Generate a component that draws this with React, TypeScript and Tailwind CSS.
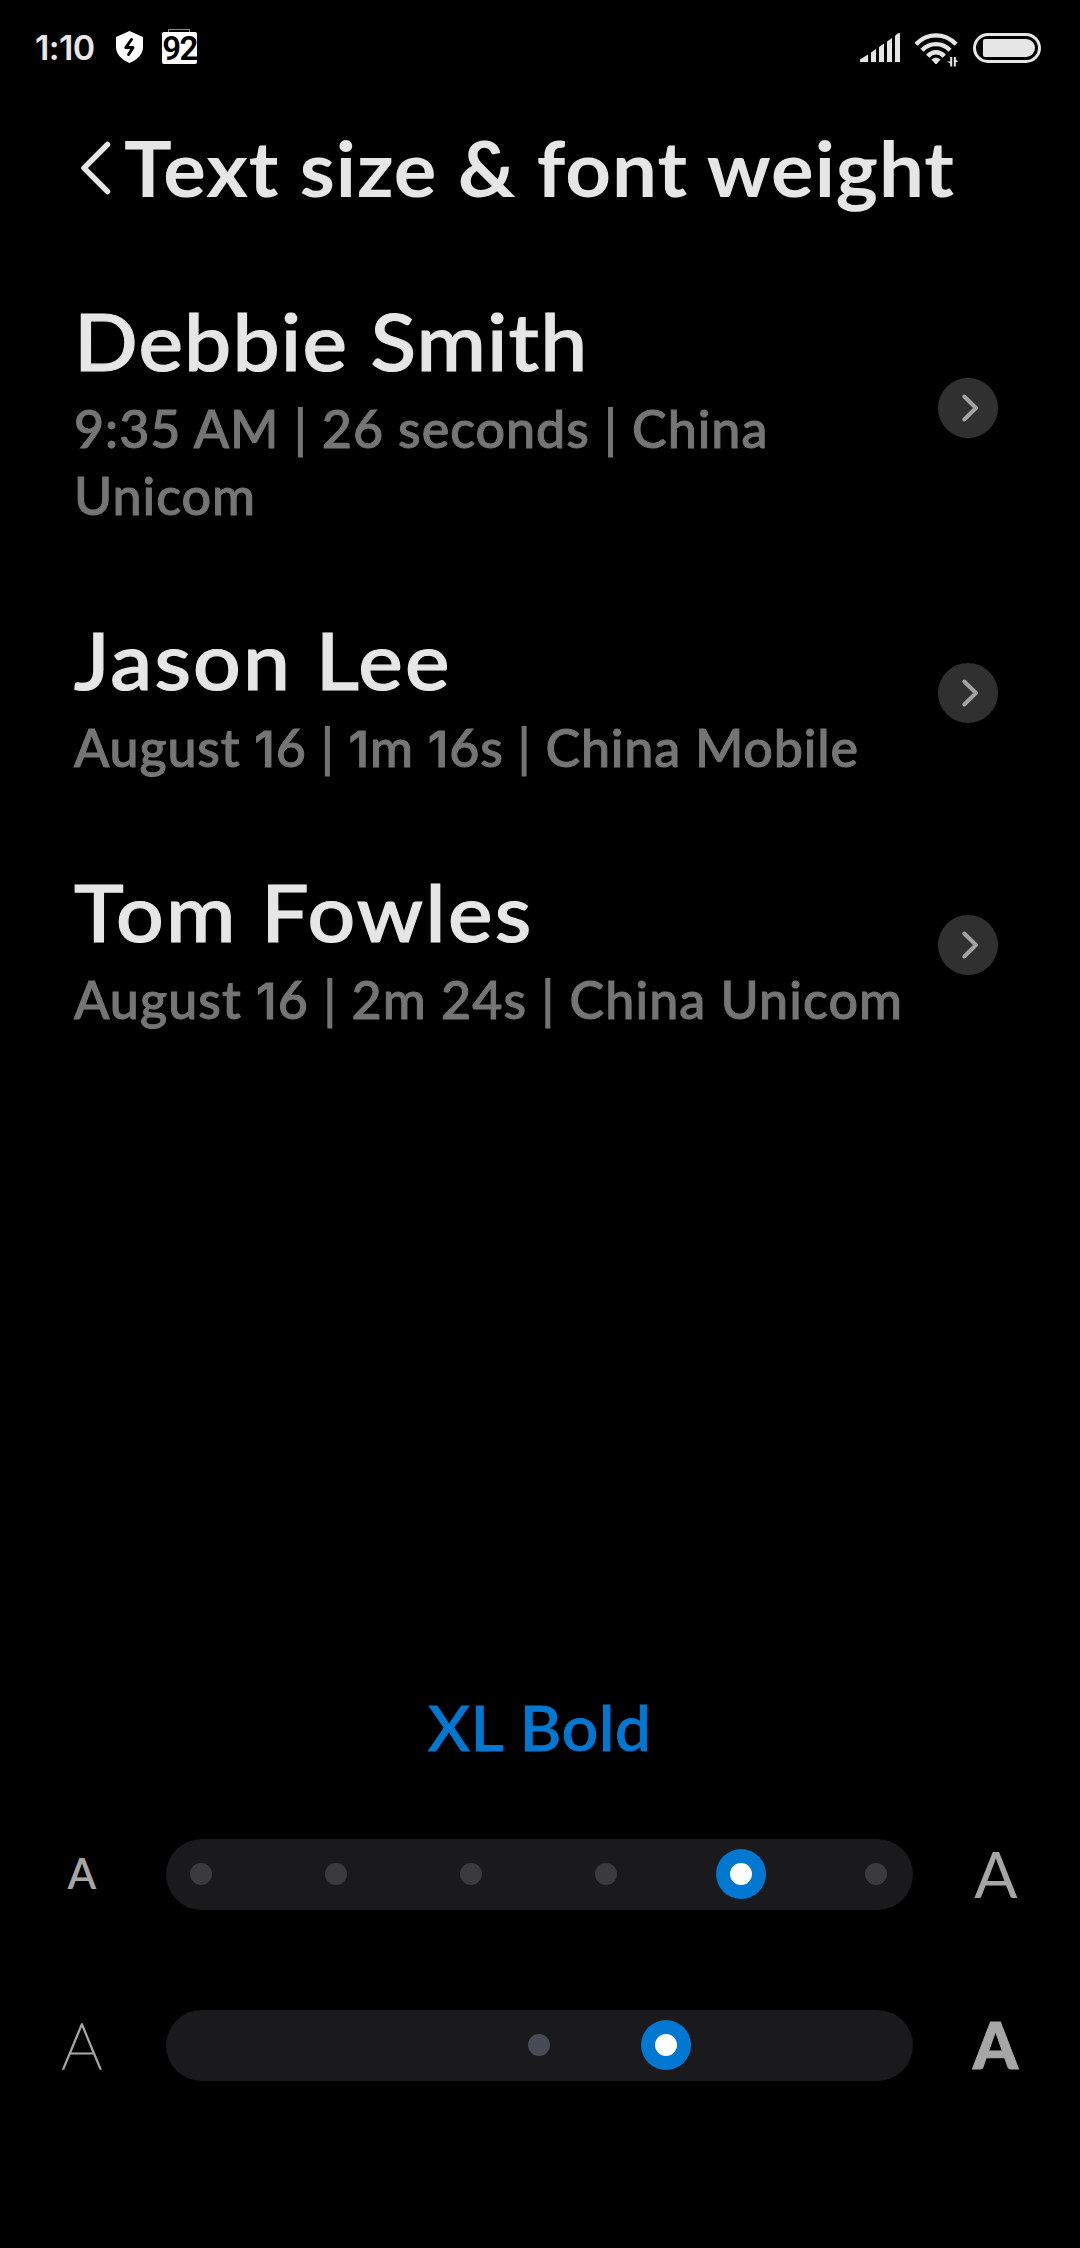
import { Fragment } from "react";

const CALLS = [
  { name: "Debbie Smith", detail: "9:35 AM | 26 seconds | China Unicom", nameGap: "tracking-[1.1px]", detailGap: "tracking-[0.95px]" },
  { name: "Jason Lee", detail: "August 16 | 1m 16s | China Mobile", nameGap: "tracking-[2.1px]", detailGap: "tracking-[0.8px]" },
  { name: "Tom Fowles", detail: "August 16 | 2m 24s | China Unicom", nameGap: "tracking-[2.2px]", detailGap: "tracking-[1.05px]" },
];

const SIZE_STEPS = [0, 1, 2, 3, 4, 5];
const ACTIVE_SIZE = 4;

// Lato's "1" has a foot, so ones are set in Inter
function Digits({ text }: { text: string }) {
  return (
    <>
      {text.split("1").map((part, i) => (
        <Fragment key={i}>
          {i > 0 && <span className="font-[Inter] text-[0.96em] leading-none">1</span>}
          {part}
        </Fragment>
      ))}
    </>
  );
}

function StatusBar() {
  return (
    <header className="flex h-24 items-center justify-between pl-[35px] pr-[39px]">
      <div className="flex h-full items-center">
        <span className="w-[81px] font-[Inter] text-[34px] font-semibold leading-none tracking-[-0.6px]">1:10</span>
        <svg width="27" height="32" viewBox="0 0 27 32" className="relative -top-px" aria-hidden="true">
          <path d="M13.5 0 L27 6 V16 C27 23.5 21 29 13.5 32 C6 29 0 23.5 0 16 V6 Z" fill="#fff" />
          <path d="M15.5 8.5 L9.8 16.5 H17 L12.6 23.5" fill="none" stroke="#000" strokeWidth="3" strokeLinecap="round" strokeLinejoin="round" />
        </svg>
        <div className="relative ml-[19px] flex h-8 w-[35px] items-center justify-center rounded-[2px] bg-white">
          <span className="absolute -top-[3px] left-[6px] h-[3px] w-[22px] border border-b-0 border-[#8a8a8a]" />
          <span className="font-[Roboto] text-[33px] font-semibold leading-none tracking-[-1.6px] text-black">92</span>
        </div>
      </div>
      <div className="flex items-center">
        <svg width="41" height="30" viewBox="0 0 41 30" fill="#e6e6e6" aria-hidden="true">
          <path d="M0 29 V26.5 L8 21.5 V29 Z M11 29 V19.5 L16 16 V29 Z M19 29 V14 L24 10.5 V29 Z M27 29 V8.5 L32 5 V29 Z M35 29 V3 L37.5 0.5 L40 0 V29 Z" />
        </svg>
        <svg width="43" height="34" viewBox="0 0 43 34" className="relative top-0.5 ml-[14px] mr-px" aria-hidden="true">
          <g fill="none" stroke="#e6e6e6" strokeWidth="4.4">
            <path d="M1 11.3 C12 -0.6 30 -0.6 41 11.3" />
            <path d="M7 17.3 C14.5 9 27.5 9 35 17.3" />
            <path d="M12.8 23.2 C17.5 18 24.5 18 29.2 23.2" />
          </g>
          <path d="M21 31 L17 26.5 Q21 23.5 25 26.5 Z" fill="#e6e6e6" stroke="#e6e6e6" strokeWidth="1" />
          <path d="M35.2 24 H37.2 V33.5 H35.2 V30.5 L32 28.5 H35.2 Z M38.8 24 H40.8 V26.5 L43 29 H40.8 V33.5 H38.8 Z" fill="#e6e6e6" />
        </svg>
        <svg width="68" height="30" viewBox="0 0 68 30" className="ml-[14px]" aria-hidden="true">
          <rect x="1.5" y="1.5" width="65" height="27" rx="13.5" fill="none" stroke="#e6e6e6" strokeWidth="3" />
          <path d="M12 6 H53 A9 9 0 0 1 53 24 H12 Q10 24 10 22 V8 Q10 6 12 6 Z" fill="#e6e6e6" />
        </svg>
      </div>
    </header>
  );
}

function CallRow({ name, detail, nameGap, detailGap }: (typeof CALLS)[number]) {
  return (
    <li className="flex items-center pl-[74px] pr-[82px]">
      <div className="flex-1 pb-[38px] pt-[44px]">
        <h2 className={`origin-left scale-x-[1.05] text-[80px] font-medium leading-[96px] text-[#e6e6e6] [-webkit-text-stroke:1.2px_#e6e6e6] ${nameGap}`}>{name}</h2>
        <p className={`mt-[7px] w-[850px] text-[52px] font-medium leading-[67px] text-[#757575] [-webkit-text-stroke:1px_#757575] ${detailGap}`}>
          <Digits text={detail} />
        </p>
      </div>
      <button className="-ml-[60px] flex size-[60px] shrink-0 items-center justify-center rounded-full bg-[#303030]" aria-label={name}>
        <svg width="60" height="60" viewBox="0 0 60 60" fill="none" stroke="#a3a3a3" strokeWidth="4" strokeLinecap="round" strokeLinejoin="round">
          <path d="M26.3 18.5 L38 30 L26.3 41.5" />
        </svg>
      </button>
    </li>
  );
}

function Knob() {
  return (
    <span className="flex size-[50px] items-center justify-center rounded-full bg-[#0077d0]">
      <span className="size-[22px] rounded-full bg-white" />
    </span>
  );
}

export default function App() {
  return (
    <main className="flex h-[2248px] w-[1080px] flex-col overflow-hidden bg-black font-[Lato,sans-serif] text-[#e6e6e6]">
      <StatusBar />

      <div className="flex h-[152px] items-start pl-[80px] pt-[26px]">
        <svg width="32" height="54" viewBox="0 0 32 54" className="mt-[19px]" fill="none" stroke="#e6e6e6" strokeWidth="5.5" strokeLinecap="round" strokeLinejoin="round" aria-label="Back">
          <path d="M27.5 3.5 L4 27 L27.5 50.5" />
        </svg>
        <h1 className="ml-[12px] origin-left scale-x-[1.05] whitespace-nowrap text-[76px] font-bold leading-[92px] tracking-[0.9px]">Text size &amp; font weight</h1>
      </div>

      <ul className="flex flex-col">
        {CALLS.map((call) => (
          <CallRow key={call.name} {...call} />
        ))}
      </ul>

      <section className="mt-auto flex flex-col pb-[167px] text-[#a6a6a6]">
        <p className="mb-[75px] scale-x-[1.05] text-center text-[61px] font-medium leading-[73px] tracking-[0.8px] text-[#0077d0] [-webkit-text-stroke:1px_#0077d0]">XL Bold</p>

        <div className="flex items-center">
          <span className="w-[164px] pb-0.5 text-center text-[42px] font-semibold leading-[67px]">A</span>
          <div className="ml-0.5 flex h-[71px] w-[747px] rounded-full bg-[#1a1a1c] pb-px pl-[10px] pr-[12px]">
            <div className="flex w-full items-center justify-between">
              {SIZE_STEPS.map((step) => (
                <span key={step} className="flex w-[50px] justify-center">
                  {step === ACTIVE_SIZE ? <Knob /> : <span className="size-[22px] rounded-full bg-[#3b3b3d]" />}
                </span>
              ))}
            </div>
          </div>
          <span className="w-[166px] pb-0.5 text-center text-[64px] font-normal leading-[67px]">A</span>
        </div>

        <div className="mt-[100px] flex items-center">
          <span className="w-[164px] pb-0.5 text-center text-[64px] font-thin leading-[67px] [-webkit-text-stroke:1.4px_#a6a6a6]">A</span>
          <div className="ml-0.5 flex h-[71px] w-[747px] items-center rounded-full bg-[#1a1a1c] pb-px pl-[362px]">
            <span className="mr-[91px] size-[22px] rounded-full bg-[#474b55]" />
            <Knob />
          </div>
          <span className="w-[165px] pb-0.5 text-center text-[64px] font-black leading-[67px] [-webkit-text-stroke:1px_#a6a6a6]">A</span>
        </div>
      </section>
    </main>
  );
}
